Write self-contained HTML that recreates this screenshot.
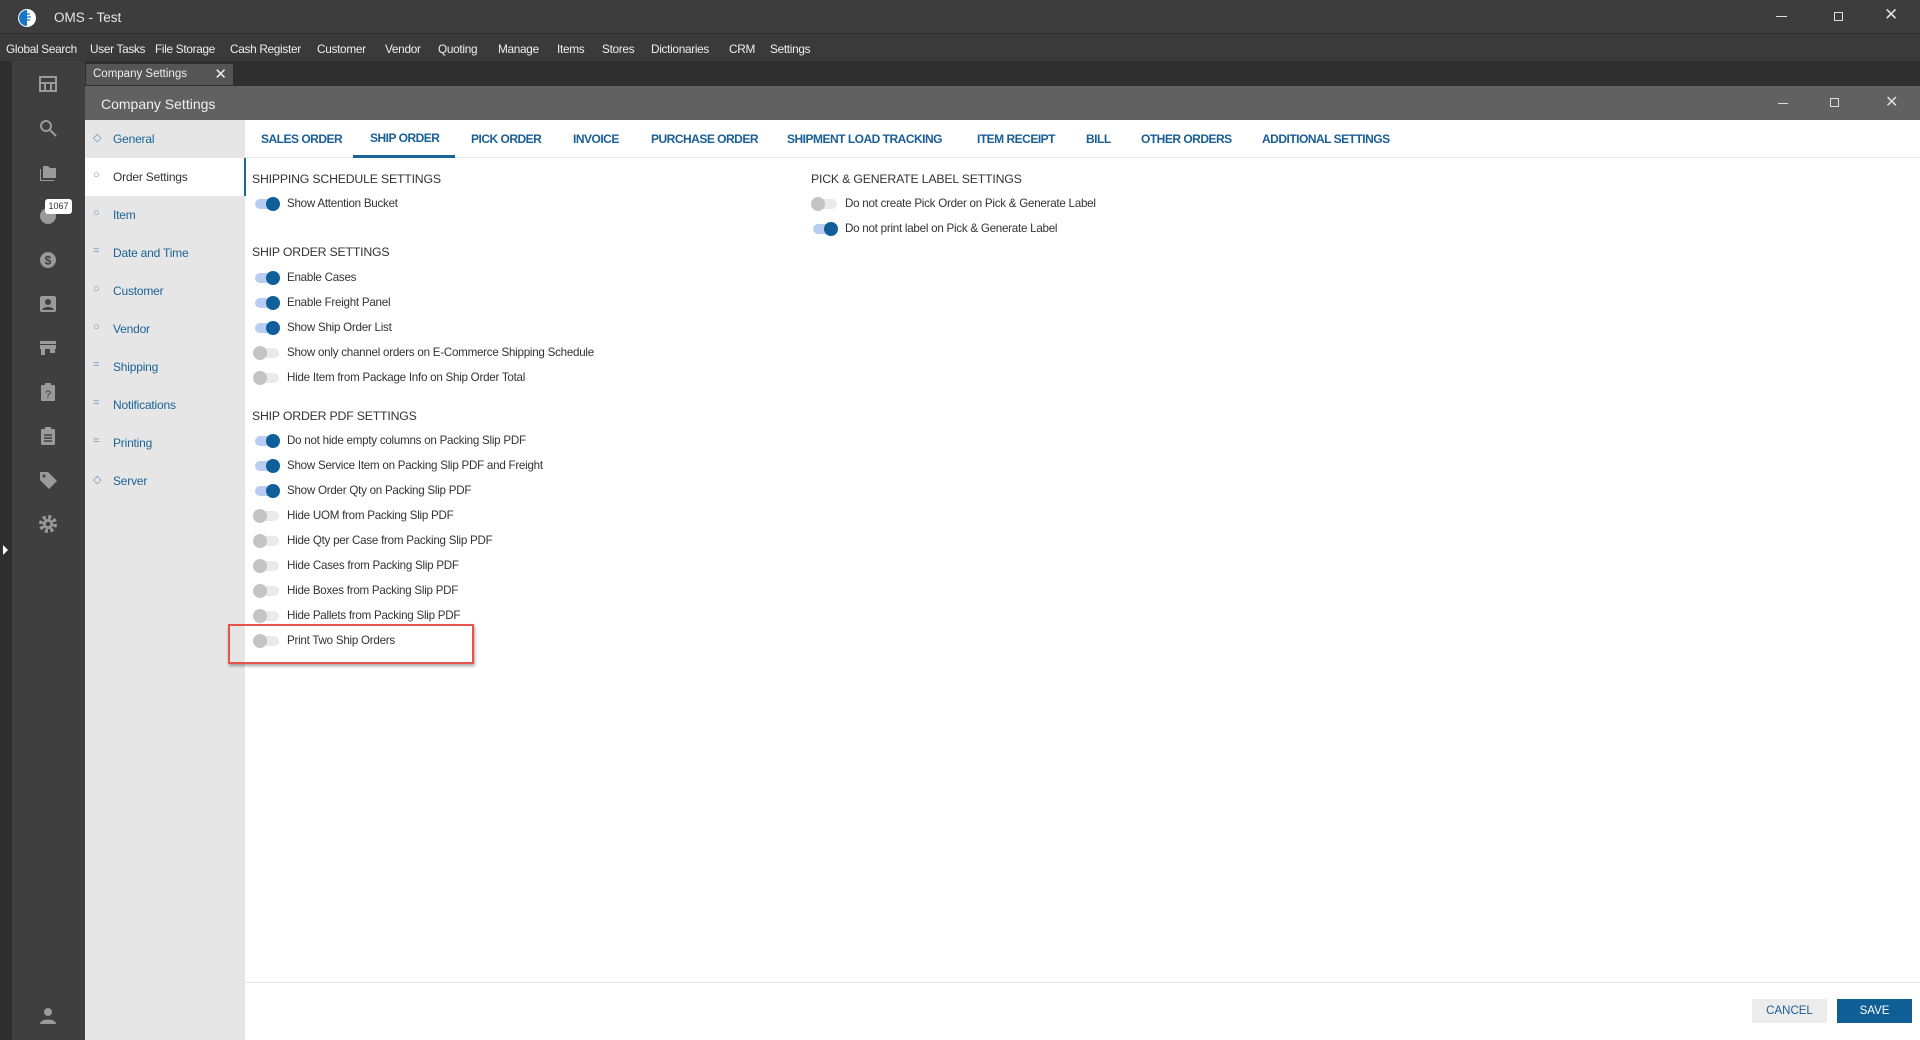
<!DOCTYPE html>
<html><head><meta charset="utf-8"><style>
*{margin:0;padding:0;box-sizing:border-box}
body{width:1920px;height:1040px;overflow:hidden;font-family:"Liberation Sans",sans-serif;background:#fff;position:relative}
.abs{position:absolute}
#title{left:0;top:0;width:1920px;height:34px;background:#3d3d3d;border-bottom:1px solid #2a2a2a}
#menu{left:0;top:34px;width:1920px;height:27px;background:#3a3a3a;color:#eee;font-size:11.8px;letter-spacing:-0.3px}
#menu span{position:absolute;top:8px}
#strip{left:0;top:61px;width:12px;height:979px;background:#2e2e2e}
#side{left:12px;top:61px;width:73px;height:979px;background:#3f3f3f}
#tabs{left:85px;top:61px;width:1835px;height:25px;background:#2f2f2f}
#hdr{left:85px;top:86px;width:1835px;height:34px;background:#616161;color:#f0f0f0;font-size:14px}
#nav{left:85px;top:120px;width:160px;height:920px;background:#e6e6e6}
.ni{position:absolute;left:0;width:160px;height:38px;font-size:12px;color:#1a6496;letter-spacing:-0.2px}
.ni .t{position:absolute;left:28px;top:12px}
.ni .ic{position:absolute;left:8px;top:11px;font-size:11px;color:#5b93bf}
.sel{background:#fff;color:#333}
.sel .ic{color:#888}
#content{left:245px;top:120px;width:1675px;height:920px;background:#fff}
.tab{position:absolute;top:132px;font-size:12px;color:#1a5e96;font-weight:bold;letter-spacing:-0.5px}
.h{position:absolute;font-size:12.3px;color:#333;letter-spacing:-0.2px}
.r{position:absolute;font-size:11.6px;color:#333;letter-spacing:-0.25px}
.tg{position:absolute;width:24px;height:10px;border-radius:5px}
.on{background:#b9cdf3}.on::after{content:"";position:absolute;right:-1px;top:-2px;width:14px;height:14px;border-radius:7px;background:#0f5f9b}
.off{background:#eaeaea}.off::after{content:"";position:absolute;left:-2px;top:-2px;width:14px;height:14px;border-radius:7px;background:#c4c4c4}
.ico{position:absolute;left:25px;width:22px;height:22px}
</style></head><body>
<div id="title" class="abs">
<svg class="abs" style="left:17px;top:8px" width="20" height="20" viewBox="0 0 20 20"><circle cx="10" cy="10" r="9" fill="#fff"/><path d="M10 2a8 8 0 0 0 0 16z" fill="#1677c8"/><path d="M8 6h5M8 9h6M8 12h5" stroke="#1677c8" stroke-width="1.3"/></svg>
<span class="abs" style="left:54px;top:10px;color:#e6e6e6;font-size:13.5px">OMS - Test</span>
<span class="abs" style="left:1776px;top:16px;width:11px;height:1px;background:#ddd"></span>
<span class="abs" style="left:1834px;top:12px;width:9px;height:9px;border:1px solid #ddd"></span>
<span class="abs" style="left:1884px;top:5px;color:#ddd;font-size:17px">✕</span>
</div>
<div id="menu" class="abs">
<span style="left:6px">Global Search</span><span style="left:90px">User Tasks</span><span style="left:155px">File Storage</span><span style="left:230px">Cash Register</span><span style="left:317px">Customer</span><span style="left:385px">Vendor</span><span style="left:438px">Quoting</span><span style="left:498px">Manage</span><span style="left:557px">Items</span><span style="left:602px">Stores</span><span style="left:651px">Dictionaries</span><span style="left:729px">CRM</span><span style="left:770px">Settings</span>
</div>
<div id="strip" class="abs"><span class="abs" style="left:3px;top:484px;width:0;height:0;border-left:5px solid #fff;border-top:5px solid transparent;border-bottom:5px solid transparent"></span></div>
<div id="side" class="abs">
<svg class="ico" style="top:12px" viewBox="0 0 22 22" fill="none" stroke="#9a9a9a" stroke-width="2"><rect x="3" y="4" width="16" height="14"/><path d="M3 10h16M8 10v8M14 10v8"/></svg>
<svg class="ico" style="top:56px" viewBox="0 0 22 22" fill="none" stroke="#9a9a9a" stroke-width="2"><circle cx="9" cy="9" r="5"/><path d="M13 13l6 6"/></svg>
<svg class="ico" style="top:100px" viewBox="0 0 22 22" fill="#9a9a9a"><path d="M6 5h5l2 2h6v10H6z"/><path d="M3 8v12h14v-1H4V8z"/></svg>
<svg class="ico" style="top:144px" viewBox="0 0 22 22"><circle cx="11" cy="11" r="8" fill="#9a9a9a"/></svg>
<span class="abs" style="left:33px;top:138px;width:27px;height:15px;background:#fff;border-radius:3px;font-size:9px;color:#333;text-align:center;line-height:15px">1067</span>
<svg class="ico" style="top:188px" viewBox="0 0 22 22"><circle cx="11" cy="11" r="8" fill="#9a9a9a"/><text x="11" y="15.5" font-size="12" text-anchor="middle" fill="#3f3f3f" font-family="Liberation Sans" font-weight="bold">$</text></svg>
<svg class="ico" style="top:232px" viewBox="0 0 22 22" fill="#9a9a9a"><rect x="3" y="3" width="16" height="16" rx="2"/><circle cx="11" cy="9" r="3" fill="#3f3f3f"/><path d="M5 17c1-4 11-4 12 0z" fill="#3f3f3f"/></svg>
<svg class="ico" style="top:276px" viewBox="0 0 22 22" fill="#9a9a9a"><rect x="3" y="4" width="16" height="3"/><rect x="3" y="8" width="16" height="4"/><rect x="4" y="12" width="4" height="6"/><rect x="13" y="12" width="5" height="4"/></svg>
<svg class="ico" style="top:320px" viewBox="0 0 22 22" fill="#9a9a9a"><rect x="4" y="4" width="14" height="16" rx="1"/><rect x="8" y="2" width="6" height="4"/><text x="11" y="17" font-size="11" text-anchor="middle" fill="#3f3f3f" font-family="Liberation Sans">?</text></svg>
<svg class="ico" style="top:364px" viewBox="0 0 22 22" fill="#9a9a9a"><rect x="4" y="4" width="14" height="16" rx="1"/><rect x="8" y="2" width="6" height="4"/><path d="M7 10h8M7 13h8M7 16h8" stroke="#3f3f3f" stroke-width="1.5"/></svg>
<svg class="ico" style="top:408px" viewBox="0 0 22 22" fill="#9a9a9a"><path d="M3 3h8l9 9-8 8-9-9z"/><circle cx="7" cy="7" r="1.5" fill="#3f3f3f"/></svg>
<svg class="ico" style="top:452px" viewBox="0 0 22 22"><circle cx="11" cy="11" r="7" fill="none" stroke="#9a9a9a" stroke-width="4" stroke-dasharray="3 2.5"/><circle cx="11" cy="11" r="5" fill="#9a9a9a"/><circle cx="11" cy="11" r="2.3" fill="#3f3f3f"/></svg>
<svg class="ico" style="top:944px" viewBox="0 0 22 22" fill="#9a9a9a"><circle cx="11" cy="7" r="4"/><path d="M3 19c0-6 16-6 16 0z"/></svg>
</div>
<div id="tabs" class="abs"><div class="abs" style="left:1px;top:3px;width:147px;height:21px;background:#555;color:#eee;font-size:11.5px;padding:4px 7px">Company Settings<span style="position:absolute;right:6px;top:1px;font-size:15px">✕</span></div></div>
<div id="hdr" class="abs"><span class="abs" style="left:16px;top:10px">Company Settings</span>
<span class="abs" style="left:1693px;top:17px;width:10px;height:1px;background:#ddd"></span>
<span class="abs" style="left:1745px;top:12px;width:9px;height:9px;border:1px solid #ddd"></span>
<span class="abs" style="left:1800px;top:6px;color:#ddd;font-size:16px">✕</span></div>
<div id="nav" class="abs">
<div class="ni" style="top:0"><span class="ic">◇</span><span class="t">General</span></div>
<div class="ni sel" style="top:38px"><span class="ic">○</span><span class="t">Order Settings</span></div>
<div class="ni" style="top:76px"><span class="ic">○</span><span class="t">Item</span></div>
<div class="ni" style="top:114px"><span class="ic">=</span><span class="t">Date and Time</span></div>
<div class="ni" style="top:152px"><span class="ic">○</span><span class="t">Customer</span></div>
<div class="ni" style="top:190px"><span class="ic">○</span><span class="t">Vendor</span></div>
<div class="ni" style="top:228px"><span class="ic">=</span><span class="t">Shipping</span></div>
<div class="ni" style="top:266px"><span class="ic">=</span><span class="t">Notifications</span></div>
<div class="ni" style="top:304px"><span class="ic">=</span><span class="t">Printing</span></div>
<div class="ni" style="top:342px"><span class="ic">◇</span><span class="t">Server</span></div>
</div>
<div id="content" class="abs"></div>
<div class="abs" style="left:244px;top:158px;width:2px;height:38px;background:#1a6496"></div>
<div class="abs" style="left:245px;top:157px;width:1675px;height:1px;background:#e8e8e8"></div>
<div class="abs" style="left:353px;top:155px;width:102px;height:3px;background:#1a6496"></div>
<span class="tab" style="left:261px">SALES ORDER</span><span class="tab" style="left:370px;top:131px">SHIP ORDER</span><span class="tab" style="left:471px">PICK ORDER</span><span class="tab" style="left:573px">INVOICE</span><span class="tab" style="left:651px">PURCHASE ORDER</span><span class="tab" style="left:787px">SHIPMENT LOAD TRACKING</span><span class="tab" style="left:977px">ITEM RECEIPT</span><span class="tab" style="left:1086px">BILL</span><span class="tab" style="left:1141px">OTHER ORDERS</span><span class="tab" style="left:1262px">ADDITIONAL SETTINGS</span>

<span class="h" style="left:252px;top:172px">SHIPPING SCHEDULE SETTINGS</span>
<span class="tg on" style="left:255px;top:199px"></span><span class="r" style="left:287px;top:197px">Show Attention Bucket</span>
<span class="h" style="left:252px;top:245px">SHIP ORDER SETTINGS</span>
<span class="tg on" style="left:255px;top:273px"></span><span class="r" style="left:287px;top:271px">Enable Cases</span>
<span class="tg on" style="left:255px;top:298px"></span><span class="r" style="left:287px;top:296px">Enable Freight Panel</span>
<span class="tg on" style="left:255px;top:323px"></span><span class="r" style="left:287px;top:321px">Show Ship Order List</span>
<span class="tg off" style="left:255px;top:348px"></span><span class="r" style="left:287px;top:346px">Show only channel orders on E-Commerce Shipping Schedule</span>
<span class="tg off" style="left:255px;top:373px"></span><span class="r" style="left:287px;top:371px">Hide Item from Package Info on Ship Order Total</span>
<span class="h" style="left:252px;top:409px">SHIP ORDER PDF SETTINGS</span>
<span class="tg on" style="left:255px;top:436px"></span><span class="r" style="left:287px;top:434px">Do not hide empty columns on Packing Slip PDF</span>
<span class="tg on" style="left:255px;top:461px"></span><span class="r" style="left:287px;top:459px">Show Service Item on Packing Slip PDF and Freight</span>
<span class="tg on" style="left:255px;top:486px"></span><span class="r" style="left:287px;top:484px">Show Order Qty on Packing Slip PDF</span>
<span class="tg off" style="left:255px;top:511px"></span><span class="r" style="left:287px;top:509px">Hide UOM from Packing Slip PDF</span>
<span class="tg off" style="left:255px;top:536px"></span><span class="r" style="left:287px;top:534px">Hide Qty per Case from Packing Slip PDF</span>
<span class="tg off" style="left:255px;top:561px"></span><span class="r" style="left:287px;top:559px">Hide Cases from Packing Slip PDF</span>
<span class="tg off" style="left:255px;top:586px"></span><span class="r" style="left:287px;top:584px">Hide Boxes from Packing Slip PDF</span>
<span class="tg off" style="left:255px;top:611px"></span><span class="r" style="left:287px;top:609px">Hide Pallets from Packing Slip PDF</span>
<span class="tg off" style="left:255px;top:636px"></span><span class="r" style="left:287px;top:634px">Print Two Ship Orders</span>
<div class="abs" style="left:228px;top:624px;width:246px;height:40px;border:2px solid #e5534b;box-shadow:1px 2px 3px rgba(0,0,0,.35)"></div>

<span class="h" style="left:811px;top:172px">PICK &amp; GENERATE LABEL SETTINGS</span>
<span class="tg off" style="left:813px;top:199px"></span><span class="r" style="left:845px;top:197px">Do not create Pick Order on Pick &amp; Generate Label</span>
<span class="tg on" style="left:813px;top:224px"></span><span class="r" style="left:845px;top:222px">Do not print label on Pick &amp; Generate Label</span>

<div class="abs" style="left:245px;top:982px;width:1675px;height:1px;background:#e6e6e6"></div>
<div class="abs" style="left:1752px;top:999px;width:75px;height:24px;background:#ececec;color:#1a5e96;font-size:11.5px;text-align:center;line-height:24px">CANCEL</div>
<div class="abs" style="left:1837px;top:999px;width:75px;height:24px;background:#0f5f96;color:#fff;font-size:11.5px;text-align:center;line-height:24px">SAVE</div>
</body></html>
